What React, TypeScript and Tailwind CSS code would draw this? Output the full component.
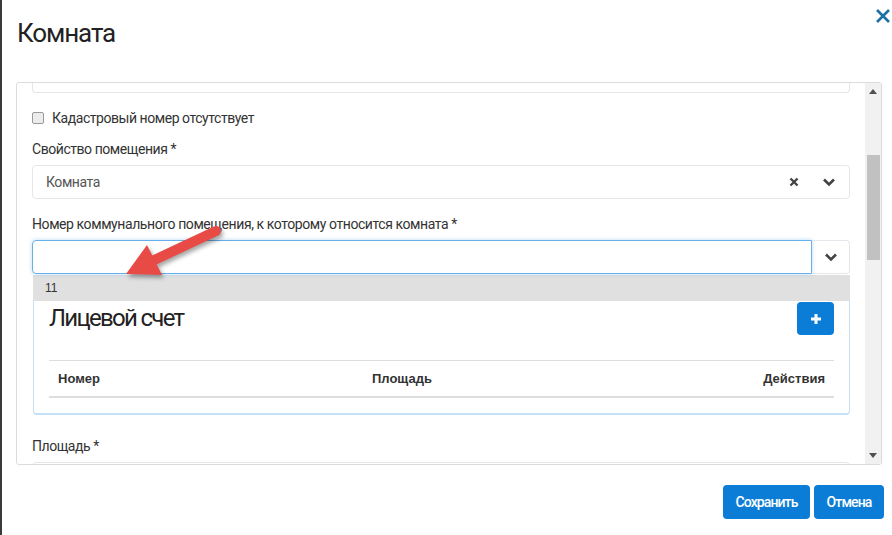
import React from "react";

const Chevron = () => (
  <svg width="14" height="10" viewBox="0 0 14 10">
    <path d="M2 2.5 L7 7.5 L12 2.5" fill="none" stroke="#444" strokeWidth="2.6" />
  </svg>
);

const Cross = () => (
  <svg width="10" height="10" viewBox="0 0 10 10">
    <path d="M1.5 1.5 L8.5 8.5 M8.5 1.5 L1.5 8.5" fill="none" stroke="#444" strokeWidth="2.4" />
  </svg>
);

export default function App() {
  const font = { fontFamily: "Roboto, 'Noto Sans', sans-serif" };
  const arial = { fontFamily: "'Liberation Sans', Arial, sans-serif" };
  return (
    <div className="relative flex h-[535px] w-[892px] overflow-hidden bg-white text-[#333]" style={font}>
      <div className="w-[2px] bg-[#3a3a3a]" />
      <div className="flex flex-1 flex-col">
        {/* header */}
        <div className="h-[82px] pl-[15px] pt-[16px]">
          <h1 className="text-[26px] font-normal leading-[34px] tracking-[-1.1px] text-[#222]">Комната</h1>
        </div>
        {/* scroll container */}
        <div className="ml-[14px] flex h-[383px] w-[866px] overflow-hidden rounded-[3px] border border-[#dcdcdc]">
          <div className="flex-1 overflow-hidden pl-[15px] pr-[15px]">
            <div className="h-[10px] rounded-b-[4px] border border-t-0 border-[#e3e6ea]" />
            <div className="mt-[15px] flex h-[20px] items-center">
              <span className="h-[12px] w-[12px] rounded-[2px] border border-[#9a9a9a] bg-[#ececec]" />
              <span className="ml-[8px] text-[14px] tracking-[-0.45px]">Кадастровый номер отсутствует</span>
            </div>
            <div className="mt-[11px] h-[20px] text-[14px] leading-[20px] tracking-[-0.45px]">Свойство помещения *</div>
            <div className="mt-[6px] flex h-[34px] items-center rounded-[4px] border border-[#e3e6ea] pl-[13px]">
              <span className="flex-1 text-[14px] tracking-[-0.45px] text-[#555]">Комната</span>
              <span className="flex w-[30px] justify-center"><Cross /></span>
              <span className="flex w-[40px] justify-center"><Chevron /></span>
            </div>
            <div className="mt-[15px] h-[20px] text-[14px] leading-[20px] tracking-[-0.42px]">
              Номер коммунального помещения, к которому относится комната *
            </div>
            <div className="mt-[6px] flex h-[34px]">
              <div className="flex-1 rounded-l-[4px] border border-[#66afe9] shadow-[0_0_4px_rgba(102,175,233,0.45)]" />
              <div className="flex w-[38px] items-center justify-center rounded-r-[4px] border border-l-0 border-[#e3e6ea]">
                <Chevron />
              </div>
            </div>
            <div className="ml-[1px] mt-[1px] flex h-[26px] items-center bg-[#e0e0e0] pl-[12px] text-[12px] text-[#333]" style={arial}>11</div>
            {/* panel */}
            <div className="ml-[1px] h-[114px] rounded-b-[4px] border border-t-0 border-b-2 border-[#c4e0f6] px-[15px]">
              <div className="flex h-[34px] items-start justify-between">
                <div className="pt-[2px] text-[24px] leading-[30px] tracking-[-1.7px] text-[#222]">Лицевой счет</div>
                <button className="mt-[1px] flex h-[33px] w-[37px] items-center justify-center rounded-[4px] bg-[#0b7dd6]">
                  <svg width="12" height="12" viewBox="0 0 12 12">
                    <path d="M6 1 V11 M1 6 H11" stroke="#fff" strokeWidth="3" />
                  </svg>
                </button>
              </div>
              <div className="mt-[25px] flex h-[38px] items-center border-t border-b-2 border-[#dddddd] text-[13px] font-bold text-[#333]" style={arial}>
                <div className="w-[314px] pl-[9px]">Номер</div>
                <div className="flex-1 pl-[9px]">Площадь</div>
                <div className="pr-[9px] text-right">Действия</div>
              </div>
            </div>
            <div className="mt-[21px] h-[20px] text-[14px] leading-[20px] tracking-[-0.45px]">Площадь *</div>
            <div className="mt-[6px] h-[34px] rounded-t-[4px] border border-[#e3e6ea]" />
          </div>
          {/* scrollbar */}
          <div className="flex w-[16px] flex-col bg-[#f1f1f1]">
            <div className="flex h-[17px] items-center justify-center">
              <svg width="8" height="5" viewBox="0 0 8 5"><path d="M0 5 L4 0 L8 5 Z" fill="#505050" /></svg>
            </div>
            <div className="ml-[2px] mr-[1px] mt-[55px] h-[105px] bg-[#c1c1c1]" />
            <div className="flex-1" />
            <div className="flex h-[17px] items-center justify-center">
              <svg width="8" height="5" viewBox="0 0 8 5"><path d="M0 0 L4 5 L8 0 Z" fill="#505050" /></svg>
            </div>
          </div>
        </div>
        {/* footer */}
        <div className="mr-[8px] mt-[20px] flex justify-end gap-[4px]">
          <button className="h-[34px] w-[87px] rounded-[4px] bg-[#0b7dd6] text-[14px] font-medium tracking-[-0.9px] text-white">Сохранить</button>
          <button className="h-[34px] w-[70px] rounded-[4px] bg-[#0b7dd6] text-[14px] font-medium tracking-[-0.9px] text-white">Отмена</button>
        </div>
      </div>
      {/* close */}
      <svg className="absolute left-[875px] top-[8px]" width="16" height="16" viewBox="0 0 16 16">
        <path d="M2 2 L14 14 M14 2 L2 14" stroke="#1b6ea6" strokeWidth="2.6" />
      </svg>
      {/* annotation arrow */}
      <svg className="pointer-events-none absolute left-0 top-0 drop-shadow-[2px_3px_2px_rgba(0,0,0,0.35)]" width="892" height="535" viewBox="0 0 892 535">
        <line x1="150" y1="262" x2="216" y2="231" stroke="#e84a45" strokeWidth="10" strokeLinecap="round" />
        <polygon points="126,274 147,245 162,275" fill="#e84a45" />
      </svg>
    </div>
  );
}
